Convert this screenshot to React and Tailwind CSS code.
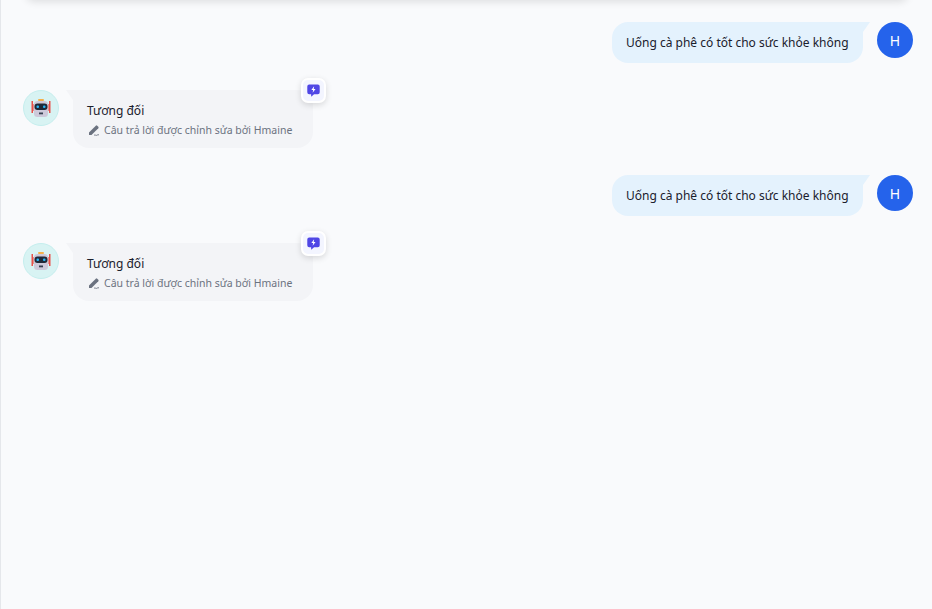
const font = { fontFamily: "'Noto Sans', sans-serif" };

function RobotAvatar() {
  return (
    <div className="w-9 h-9 shrink-0 rounded-full bg-[#d8f3f3] border border-[#c5eeee] flex items-center justify-center">
      <svg width="24" height="24" viewBox="0 0 24 24">
        <rect x="9" y="3" width="6" height="2" rx="1" fill="#f5b04c" />
        <rect x="2.500" y="5" width="1.500" height="12" fill="#e8504a" />
        <rect x="20" y="5" width="1.500" height="12" fill="#e8504a" />
        <rect x="4" y="8" width="2" height="7" fill="#e8504a" opacity="0.6" />
        <rect x="18" y="8" width="2" height="7" fill="#e8504a" opacity="0.6" />
        <rect x="5" y="5" width="14" height="16" rx="3.500" fill="#cdc9da" />
        <rect x="5.500" y="7.500" width="13" height="6.500" rx="3" fill="#1f2937" />
        <rect x="7.500" y="9.500" width="2.500" height="2.500" rx="1" fill="#29b6f6" />
        <rect x="14" y="9.500" width="2.500" height="2.500" rx="1" fill="#29b6f6" />
        <rect x="10" y="16.500" width="4" height="1.800" fill="#374151" />
      </svg>
    </div>
  );
}

function UserRow() {
  return (
    <div className="flex justify-end gap-[14px]">
      <div className="relative h-[41px] w-[251px] rounded-[16px] rounded-tr-none bg-[#e4f2fd] flex items-center pl-[14px] pt-px text-[12px] text-[#1a202c] whitespace-nowrap">
        Uống cà phê có tốt cho sức khỏe không
        <div className="absolute left-full top-0 w-[7px] h-[10px] bg-[#e4f2fd] [clip-path:polygon(0_0,100%_0,0_100%)]" />
      </div>
      <div className="w-9 h-9 shrink-0 rounded-full bg-[#2563eb] text-white text-sm pt-px flex items-center justify-center">
        H
      </div>
    </div>
  );
}

function BotRow() {
  return (
    <div className="flex gap-[14px]">
      <RobotAvatar />
      <div className="relative h-[58px] w-[240px] rounded-[16px] rounded-tl-none bg-[#f3f4f7] pl-[14px] pt-[12px]">
        <div className="absolute right-full top-0 w-[7px] h-[10px] bg-[#f3f4f7] [clip-path:polygon(0_0,100%_0,100%_100%)]" />
        <div className="text-[12px] leading-[17px] text-[#1a202c]">Tương đối</div>
        <div className="mt-[2px] flex items-center gap-[3px] text-[10.5px] leading-[18px] text-[#6b7280] whitespace-nowrap">
          <svg width="14" height="14" viewBox="0 0 14 14" className="shrink-0">
            <path d="M2 9.500 8.800 2.700a1 1 0 0 1 1.400 0l1.100 1.100a1 1 0 0 1 0 1.400L4.500 12H2z" fill="#6b7280" />
            <path d="M7 12.300c1.200-.9 1.800.5 2.800 0 .7-.4 1.200-.8 2.200-.5" fill="none" stroke="#6b7280" strokeWidth="0.900" />
          </svg>
          Câu trả lời được chỉnh sửa bởi Hmaine
        </div>
        <div className="absolute -top-3 -right-[13px] w-[25px] h-[25px] rounded-[7px] bg-[#f3f5ff] border-2 border-white shadow-[0_2px_6px_rgba(0,0,0,0.14)] flex items-center justify-center">
          <svg width="15" height="15" viewBox="0 0 14 14">
            <path d="M3 1.500h8A1.800 1.800 0 0 1 12.800 3.300v5.400A1.800 1.800 0 0 1 11 10.500H7.500l-2.700 2.300v-2.300H3A1.800 1.800 0 0 1 1.200 8.700V3.300A1.800 1.800 0 0 1 3 1.500z" fill="#4f46e5" />
            <path d="M7.600 3 5 6.500h1.700L6.200 9l2.700-3.500H7.200z" fill="#fff" />
          </svg>
        </div>
      </div>
    </div>
  );
}

export default function App() {
  return (
    <div className="relative h-[609px] w-[932px] overflow-hidden bg-[#f9fafc] border-l border-[#e5e7eb]" style={font}>
      <div className="absolute -top-2 left-[25px] right-[24px] h-2 rounded-b-lg bg-white shadow-[0_1px_8px_rgba(0,0,0,0.14)]" />
      <div className="flex flex-col gap-[27px] pt-[22px] pl-[22px] pr-[19px]">
        <UserRow />
        <BotRow />
        <UserRow />
        <BotRow />
      </div>
    </div>
  );
}
